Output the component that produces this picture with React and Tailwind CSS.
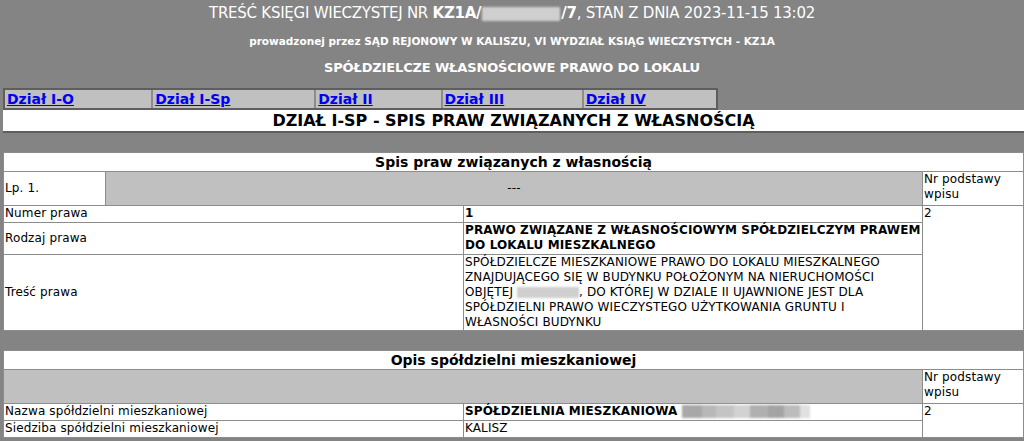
import React from "react";

const cell = "border border-[#8c8c8c] px-[1px]";

function Blur({ className }) {
  return <span className={"inline-block align-middle bg-[#cfcfcf] blur-[1px] " + className} />;
}

function App() {
  const tabs = [
    ["Dział I-O", "w-[149px]"],
    ["Dział I-Sp", "w-[164px]"],
    ["Dział II", "w-[127px]"],
    ["Dział III", "w-[142px]"],
    ["Dział IV", "w-[133px]"],
  ];

  return (
    <div className="min-h-screen bg-[#848484] text-black text-[12px] leading-[15px] tracking-[0.12px]" style={{ fontFamily: '"DejaVu Sans", Verdana, sans-serif' }}>
      <div className="flex flex-col items-center text-white pt-[4px] tracking-normal">
        <div className="text-[15px] leading-[19px] h-[19px] tracking-[-0.25px]">
          TREŚĆ KSIĘGI WIECZYSTEJ NR <b>KZ1A/</b>
          <Blur className="w-[78px] h-[14px] mx-[1px]" />
          <b>/7</b>, STAN Z DNIA 2023-11-15 13:02
        </div>
        <div className="mt-[11px] text-[10.5px] leading-[14px] font-bold">
          prowadzonej przez SĄD REJONOWY W KALISZU, VI WYDZIAŁ KSIĄG WIECZYSTYCH - KZ1A
        </div>
        <div className="mt-[12px] text-[13px] leading-[16px] font-bold tracking-[-0.15px]">
          SPÓŁDZIELCZE WŁASNOŚCIOWE PRAWO DO LOKALU
        </div>
      </div>

      <div className="pl-[3px] mt-[12px]">
        <div className="flex w-[715px] h-[22px] border-2 border-[#5e5e5e] bg-[#c0c0c0] tracking-normal">
          {tabs.map(([t, w], i) => (
            <div key={t} className={"h-full border-[#8c8c8c] " + w + (i < tabs.length - 1 ? " border-r-2" : "")}>
              <a href="#" className="block px-[2px] pt-[1px] text-[14px] leading-[17px] font-bold text-[#0000ee] underline">
                {t}
              </a>
            </div>
          ))}
        </div>

        <div className="bg-white h-[23px] border-b-2 border-[#5e5e5e] flex items-center justify-center tracking-normal">
          <span className="text-[16px] leading-[19px] font-bold">
            DZIAŁ I-SP - SPIS PRAW ZWIĄZANYCH Z WŁASNOŚCIĄ
          </span>
        </div>

        <div className="h-[19px]" />

        <table className="w-full table-fixed border-collapse bg-white">
          <colgroup>
            <col className="w-[102px]" />
            <col className="w-[358px]" />
            <col className="w-[459px]" />
            <col />
          </colgroup>
          <tbody>
            <tr className="h-[19px]">
              <td colSpan={4} className="border border-[#8c8c8c] text-center font-bold text-[14px] leading-[17px] tracking-normal">
                Spis praw związanych z własnością
              </td>
            </tr>
            <tr className="h-[34px]">
              <td className={cell + " align-middle"}>Lp. 1.</td>
              <td colSpan={2} className={cell + " align-middle text-center bg-[#c0c0c0]"}>---</td>
              <td className={cell + " align-top"}>Nr podstawy<br />wpisu</td>
            </tr>
            <tr className="h-[17px]">
              <td colSpan={2} className={cell + " align-top"}>Numer prawa</td>
              <td className={cell + " align-top font-bold"}>1</td>
              <td rowSpan={3} className={cell + " align-top"}>2</td>
            </tr>
            <tr className="h-[32px]">
              <td colSpan={2} className={cell + " align-middle"}>Rodzaj prawa</td>
              <td className={cell + " align-top font-bold"}>
                PRAWO ZWIĄZANE Z WŁASNOŚCIOWYM SPÓŁDZIELCZYM PRAWEM DO LOKALU MIESZKALNEGO
              </td>
            </tr>
            <tr className="h-[75px]">
              <td colSpan={2} className={cell + " align-middle"}>Treść prawa</td>
              <td className={cell + " align-top"}>
                SPÓŁDZIELCZE MIESZKANIOWE PRAWO DO LOKALU MIESZKALNEGO ZNAJDUJĄCEGO SIĘ W BUDYNKU POŁOŻONYM NA NIERUCHOMOŚCI OBJĘTEJ{" "}
                <Blur className="w-[62px] h-[11px]" />, DO KTÓREJ W DZIALE II UJAWNIONE JEST DLA SPÓŁDZIELNI PRAWO WIECZYSTEGO UŻYTKOWANIA GRUNTU I WŁASNOŚCI BUDYNKU
              </td>
            </tr>
          </tbody>
        </table>

        <div className="h-[19px]" />

        <table className="w-full table-fixed border-collapse bg-white">
          <colgroup>
            <col className="w-[460px]" />
            <col className="w-[459px]" />
            <col />
          </colgroup>
          <tbody>
            <tr className="h-[19px]">
              <td colSpan={3} className="border border-[#8c8c8c] text-center font-bold text-[14px] leading-[17px] tracking-normal">
                Opis spółdzielni mieszkaniowej
              </td>
            </tr>
            <tr className="h-[34px]">
              <td colSpan={2} className={cell + " bg-[#c0c0c0]"} />
              <td className={cell + " align-top"}>Nr podstawy<br />wpisu</td>
            </tr>
            <tr className="h-[17px]">
              <td className={cell + " align-top"}>Nazwa spółdzielni mieszkaniowej</td>
              <td className={cell + " align-top font-bold"}>
                <span className="flex items-center">
                  SPÓŁDZIELNIA MIESZKANIOWA
                  <span className="ml-[4px] flex h-[13px] blur-[1px]">
                    <span className="w-[20px] bg-[#a8a8a8]" />
                    <span className="w-[14px] bg-[#b8b8b8]" />
                    <span className="w-[18px] bg-[#c4c4c4]" />
                    <span className="w-[16px] bg-[#d2d2d2]" />
                    <span className="w-[18px] bg-[#b0b0b0]" />
                    <span className="w-[16px] bg-[#a4a4a4]" />
                    <span className="w-[16px] bg-[#bcbcbc]" />
                    <span className="w-[10px] bg-[#e0e0e0]" />
                  </span>
                </span>
              </td>
              <td rowSpan={2} className={cell + " align-top"}>2</td>
            </tr>
            <tr className="h-[17px]">
              <td className={cell + " align-top"}>Siedziba spółdzielni mieszkaniowej</td>
              <td className={cell + " align-top"}>KALISZ</td>
            </tr>
          </tbody>
        </table>
      </div>
    </div>
  );
}

export default App;
